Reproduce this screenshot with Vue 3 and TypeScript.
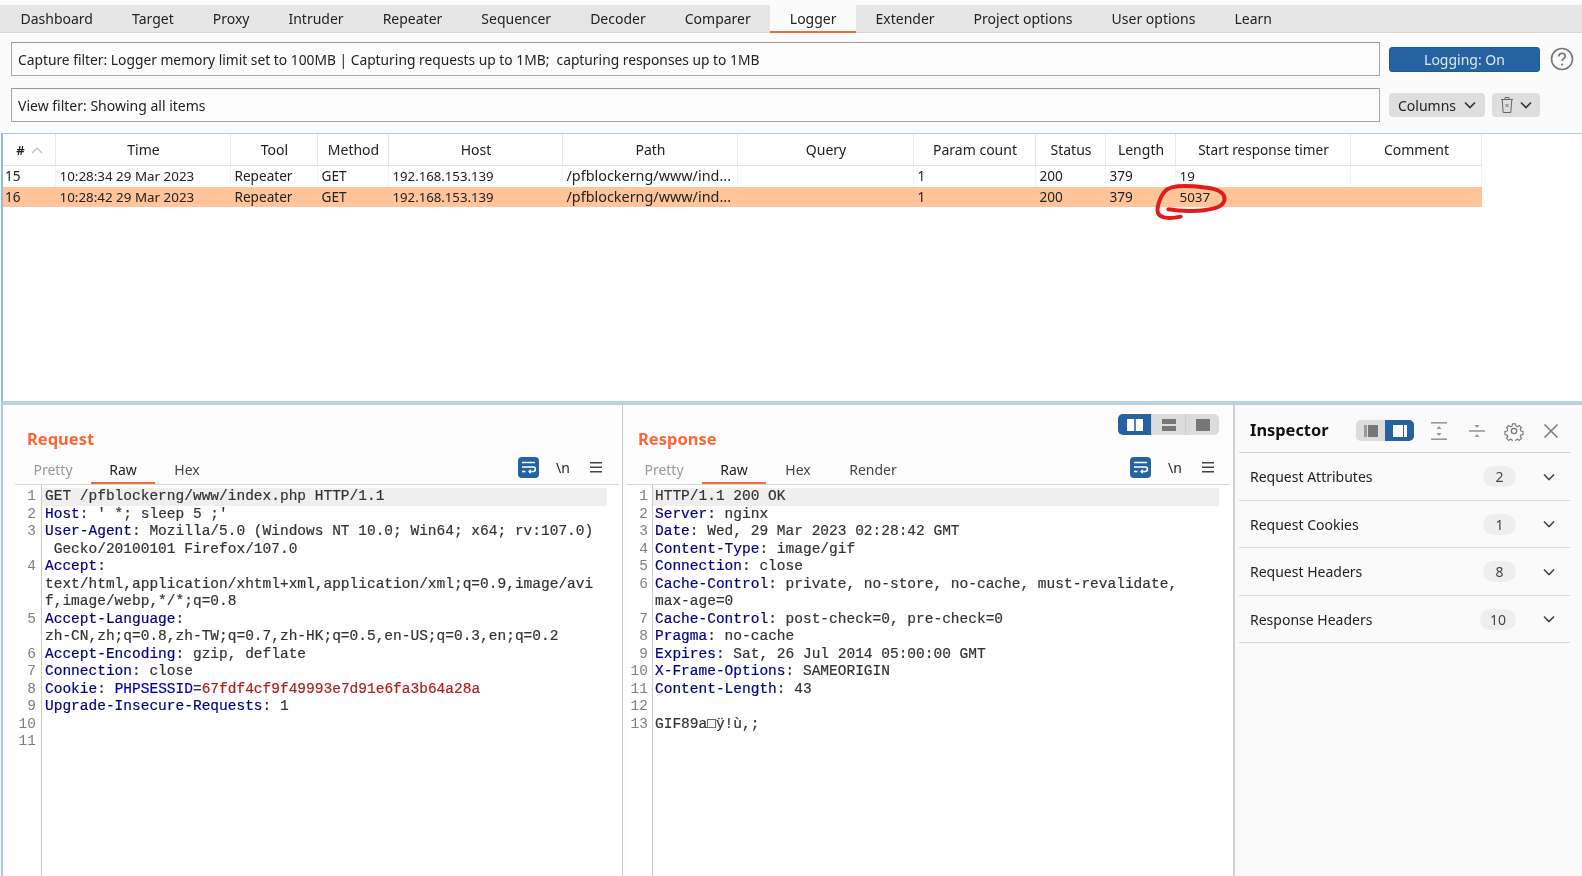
<script setup lang="ts">
interface Seg { t: string; c?: string }
interface Line { n: string; segs: Seg[] }

const tabs: string[] = ['Dashboard','Target','Proxy','Intruder','Repeater','Sequencer','Decoder','Comparer','Logger','Extender','Project options','User options','Learn']
const captureText = 'Capture filter: Logger memory limit set to 100MB | Capturing requests up to 1MB;  capturing responses up to 1MB'
const cols = ['#','Time','Tool','Method','Host','Path','Query','Param count','Status','Length','Start response timer','Comment']
const rows = [
  ['15','10:28:34 29 Mar 2023','Repeater','GET','192.168.153.139','/pfblockerng/www/ind...','','1','200','379','19',''],
  ['16','10:28:42 29 Mar 2023','Repeater','GET','192.168.153.139','/pfblockerng/www/ind...','','1','200','379','5037',''],
]
const k = (key: string, val: string, n: string): Line => ({ n, segs: [{ t: key, c: 'key' }, { t: val }] })
const p = (val: string, n = ''): Line => ({ n, segs: [{ t: val }] })
const reqLines: Line[] = [
  p('GET /pfblockerng/www/index.php HTTP/1.1','1'),
  k('Host',": ' *; sleep 5 ;'",'2'),
  k('User-Agent',': Mozilla/5.0 (Windows NT 10.0; Win64; x64; rv:107.0)','3'),
  p(' Gecko/20100101 Firefox/107.0'),
  k('Accept',':','4'),
  p('text/html,application/xhtml+xml,application/xml;q=0.9,image/avi'),
  p('f,image/webp,*/*;q=0.8'),
  k('Accept-Language',':','5'),
  p('zh-CN,zh;q=0.8,zh-TW;q=0.7,zh-HK;q=0.5,en-US;q=0.3,en;q=0.2'),
  k('Accept-Encoding',': gzip, deflate','6'),
  k('Connection',': close','7'),
  { n:'8', segs:[{t:'Cookie',c:'key'},{t:': '},{t:'PHPSESSID',c:'sess'},{t:'='},{t:'67fdf4cf9f49993e7d91e6fa3b64a28a',c:'red'}] },
  k('Upgrade-Insecure-Requests',': 1','9'),
  p('','10'),
  p('','11'),
]
const resLines: Line[] = [
  p('HTTP/1.1 200 OK','1'),
  k('Server',': nginx','2'),
  k('Date',': Wed, 29 Mar 2023 02:28:42 GMT','3'),
  k('Content-Type',': image/gif','4'),
  k('Connection',': close','5'),
  k('Cache-Control',': private, no-store, no-cache, must-revalidate,','6'),
  p('max-age=0'),
  k('Cache-Control',': post-check=0, pre-check=0','7'),
  k('Pragma',': no-cache','8'),
  k('Expires',': Sat, 26 Jul 2014 05:00:00 GMT','9'),
  k('X-Frame-Options',': SAMEORIGIN','10'),
  k('Content-Length',': 43','11'),
  p('','12'),
  p('GIF89a\u25A1ÿ!ù,;','13'),
]
const panels = [
  { cls:'req', title:'Request', tabs:['Pretty','Raw','Hex'], lines:reqLines },
  { cls:'res', title:'Response', tabs:['Pretty','Raw','Hex','Render'], lines:resLines },
]
const attrs = [
  { name:'Request Attributes', count:'2' },
  { name:'Request Cookies', count:'1' },
  { name:'Request Headers', count:'8' },
  { name:'Response Headers', count:'10' },
]
</script>

<template>
  <div class="app">
    <nav class="tabs">
      <div v-for="t in tabs" :key="t" class="tab" :class="{ active: t === 'Logger' }">{{ t }}</div>
    </nav>

    <section class="filters">
      <div class="filter-row first">
        <div class="filter capture">{{ captureText }}</div>
        <button class="logging">Logging: On</button>
        <svg class="help" width="24" height="24" viewBox="0 0 24 24">
          <circle cx="12" cy="12" r="10.5" fill="none" stroke="#777" stroke-width="1.6"/>
          <path d="M8.8 9.4c0-2 1.5-3.1 3.3-3.1s3.2 1.1 3.2 2.8c0 2.500-3.200 2.500-3.200 5" fill="none" stroke="#777" stroke-width="1.7"/>
          <circle cx="12.100" cy="17.600" r="1.100" fill="#777"/>
        </svg>
      </div>
      <div class="filter-row second">
        <div class="filter">View filter: Showing all items</div>
        <button class="grey columns">Columns
          <svg width="12" height="8" viewBox="0 0 12 8"><path d="M1 1.500l5 5 5-5" fill="none" stroke="#333" stroke-width="1.600"/></svg>
        </button>
        <button class="grey trash">
          <svg width="14" height="18" viewBox="0 0 14 18" fill="none" stroke="#666" stroke-width="1"><path d="M1 3.500h12M5 3.500V1.500h4v2M2.200 3.500l1 13h7.600l1-13"/><path d="M5.500 8l3 3M8.500 8l-3 3" stroke-width="0.900"/></svg>
          <svg width="12" height="8" viewBox="0 0 12 8"><path d="M1 1.500l5 5 5-5" fill="none" stroke="#333" stroke-width="1.600"/></svg>
        </button>
      </div>
    </section>

    <section class="table">
      <div class="thead grid">
        <div v-for="c in cols" :key="c" class="th" :class="{ narrow: c === 'Start response timer' }">
          <span v-if="c === '#'" class="hash">#
            <svg width="12" height="7" viewBox="0 0 12 7"><path d="M1 6l5-5 5 5" fill="none" stroke="#bbb" stroke-width="1.200"/></svg>
          </span>
          <template v-else>{{ c }}</template>
        </div>
      </div>
      <div v-for="(r, i) in rows" :key="i" class="tr grid" :class="{ sel: i === 1 }">
        <div v-for="(v, j) in r" :key="j" class="td" :class="'c' + j">{{ v }}</div>
      </div>
      <svg class="scribble" width="110" height="60" viewBox="0 0 330 180">
        <path d="M85 118C125 125 185 125 222 115C247 108 258 95 252 78C244 60 212 54 190 52C160 48 120 46 95 52C72 58 62 78 56 100C50 122 50 136 72 142C90 146 108 143 122 140" fill="none" stroke="#e01b1b" stroke-width="12" stroke-linecap="round"/>
      </svg>
    </section>

    <section class="bottom">
      <div v-for="pn in panels" :key="pn.cls" class="panel" :class="pn.cls">
        <div v-if="pn.cls === 'res'" class="views">
          <span class="view on"><svg width="18" height="12" viewBox="0 0 18 12" fill="#fff"><rect x="1" width="7.200" height="12"/><rect x="9.800" width="7.200" height="12"/></svg></span>
          <span class="view"><svg width="14" height="12" viewBox="0 0 14 12" fill="#777"><rect width="14" height="5"/><rect y="7" width="14" height="5"/></svg></span>
          <span class="view"><svg width="14" height="12" viewBox="0 0 14 12" fill="#777"><rect width="14" height="12"/></svg></span>
        </div>
        <h2 class="title">{{ pn.title }}</h2>
        <div class="subtabs">
          <span v-for="t in pn.tabs" :key="t" class="sub" :class="{ cur: t === 'Raw', dim: t === 'Pretty', render: t === 'Render' }">{{ t }}</span>
          <div class="tools">
            <span class="wrap">
              <svg width="21" height="21" viewBox="0 0 21 21" fill="none" stroke="#fff" stroke-width="1.600">
                <path d="M4 5.500h13M4 10h11.500c2.500 0 2.500 4.500 0 4.500H11"/><path d="M12.800 12.800L11 14.500l1.800 1.700" stroke-width="1.200"/><path d="M4 14.500h3.500"/>
              </svg>
            </span>
            <span class="nl">\n</span>
            <svg class="menu" width="12" height="11" viewBox="0 0 12 11" fill="#444"><rect width="12" height="1.500"/><rect y="4.500" width="12" height="1.500"/><rect y="9" width="12" height="1.500"/></svg>
          </div>
        </div>
        <div class="editor">
          <div class="gutter">
            <div v-for="(l, i) in pn.lines" :key="i" class="num">{{ l.n }}</div>
          </div>
          <div class="code">
            <div v-for="(l, i) in pn.lines" :key="i" class="line" :class="{ hl: i === 0 }"><span v-for="(s, j) in l.segs" :key="j" :class="s.c">{{ s.t }}</span></div>
          </div>
        </div>
      </div>

      <aside class="inspector">
        <header class="ins-head">
          <h3>Inspector</h3>
          <div class="toggle">
            <span class="tg"><svg width="14" height="12" viewBox="0 0 14 12"><rect width="3" height="12" fill="#999"/><rect x="4" width="10" height="12" fill="#777"/></svg></span>
            <span class="tg on"><svg width="14" height="12" viewBox="0 0 14 12" fill="#fff"><rect width="10" height="12"/><rect x="11" width="3" height="12"/></svg></span>
          </div>
          <svg class="ic a" width="16" height="18" viewBox="0 0 16 18" fill="#999"><rect width="16" height="1.600"/><rect y="16.400" width="16" height="1.600"/><path d="M8 4l2.500 3h-5zM8 14l-2.500-3h5z"/></svg>
          <svg class="ic b" width="16" height="18" viewBox="0 0 16 18" fill="#999"><rect y="8.200" width="16" height="1.600"/><path d="M8 6L5.500 3h5zM8 12l2.500 3h-5z"/></svg>
          <svg class="ic c" width="20" height="20" viewBox="0 0 24 24" fill="none" stroke="#777" stroke-width="1.500">
            <circle cx="12" cy="12" r="3.200"/>
            <path d="M10 2.500h4l.6 2.900 2 .9 2.500-1.600 2.800 2.800-1.600 2.500.9 2 2.800.6v4l-2.800.6-.9 2 1.600 2.500-2.800 2.800-2.500-1.600-2 .9-.6 2.900h-4l-.6-2.900-2-.9-2.500 1.600-2.800-2.800 1.600-2.500-.9-2-2.800-.6v-4l2.800-.6.9-2-1.600-2.500 2.800-2.800 2.500 1.600 2-.9z" transform="translate(1.200 1.200) scale(.9)"/>
          </svg>
          <svg class="ic d" width="14" height="14" viewBox="0 0 14 14" stroke="#777" stroke-width="1.500"><path d="M.5.5l13 13M13.500.5l-13 13"/></svg>
        </header>
        <div v-for="a in attrs" :key="a.name" class="attr">
          <span class="attr-name">{{ a.name }}</span>
          <span class="pill">{{ a.count }}</span>
          <svg class="chev" width="12" height="8" viewBox="0 0 12 8"><path d="M1 1.500l5 5 5-5" fill="none" stroke="#444" stroke-width="1.600"/></svg>
        </div>
      </aside>
    </section>
  </div>
</template>

<style>
html, body { margin: 0; background: #fbfbfb; overflow: hidden; }
</style>

<style scoped>
.app {
  width: 1582px; height: 876px; display: flex; flex-direction: column;
  font-family: "Noto Sans", "Open Sans", sans-serif; font-size: 14px; color: #222;
  background: #fbfbfb; filter: blur(0.4px);
}
.tabs { margin-top: 5px; height: 27px; border-bottom: 1px solid #d8d8d8; background: #e6e6e6; display: flex; padding-left: 1px; flex: none; }
.tab { padding: 0 19.5px; line-height: 27px; height: 28px; box-sizing: border-box; white-space: nowrap; }
.tab.active { background: #fbfbfb; border-bottom: 2px solid #f26b3a; }
.filters { flex: none; height: 100px; padding: 9px 0 0 11px; box-sizing: border-box; display: flex; flex-direction: column; gap: 12px; }
.filter-row { display: flex; align-items: center; height: 34px; }
.filter { width: 1369px; flex: none; height: 34px; box-sizing: border-box; border: 1px solid #a6a6a6; border-top-color: #999; padding: 0 6px; line-height: 34px; white-space: pre; background: #fcfcfc; }
.filter.capture { font-size: 13.800px; }
button { font: inherit; border: 0; padding: 0; color: inherit; }
.logging { margin-left: 9px; width: 151px; height: 25px; background: #24639f; color: #dbe8f4; border-radius: 3px; border: 1px solid #1f5a92; box-sizing: border-box; }
.help { margin-left: 10px; }
.grey { background: #dedede; border-radius: 4px; height: 24px; display: flex; align-items: center; justify-content: center; }
.columns { margin-left: 9px; width: 96px; gap: 8px; }
.trash { margin-left: 7px; width: 48px; gap: 6px; }
.table { flex: none; height: 271px; box-sizing: border-box; background: #fff; border-top: 1px solid #a9c8e8; border-bottom: 3px solid #b9d2ec; border-left: 2px solid #8fbbe6; margin-left: 1px; position: relative; }
.grid { display: grid; grid-template-columns: 53px 175px 87px 71px 174px 175px 176px 122px 70px 70px 175px 131px; width: 1479px; }
.thead { height: 31px; border-bottom: 1px solid #e4e4e4; }
.th { text-align: center; line-height: 32px; border-right: 1px solid #e8e8e8; white-space: nowrap; padding-left: 1px; box-sizing: border-box; }
.th.narrow { font-size: 13.600px; }
.hash { display: inline-flex; align-items: center; gap: 6px; font-weight: 600; font-size: 13px; }
.tr { height: 20px; margin-top: 0; }
.thead + .tr { height: 20.500px; }
.td { line-height: 20px; padding-left: 3.500px; white-space: nowrap; overflow: hidden; box-sizing: border-box; border-right: 1px solid #f4f4f4; font-size: 13.600px; }
.td:first-child { padding-left: 2px; }
.td.c1 { font-size: 13.400px; }
.td.c4 { font-size: 13.200px; }
.td.c5 { font-size: 14.400px; }
.td.c10 { font-size: 13.400px; }
.tr.sel { background: #ffc499; }
.tr.sel .td { border-right-color: transparent; }
.scribble { position: absolute; left: 1137px; top: 36px; }
.bottom { flex: 1; display: flex; min-height: 0; border-top: 1px solid #c8c8c8; margin-left: 1px; border-left: 2px solid #a9c8e8; }
.panel { position: relative; box-sizing: border-box; height: 100%; background: #fdfdfd; }
.panel.req { width: 620px; border-right: 1px solid #c8c8c8; padding: 0 0 0 12px; }
.panel.res { width: 612px; border-right: 2px solid #d0d0d0; padding-left: 3px; }
.title { margin: 23px 0 0; font-size: 16.500px; line-height: 22px; font-weight: 700; color: #ff6633; }
.req .title { padding-left: 12px; }
.res .title { padding-left: 12px; }
.subtabs { margin-top: 8px; height: 26px; border-bottom: 1px solid #d4dcd8; display: flex; margin-right: 3px; position: relative; box-sizing: content-box; }
.sub { height: 26px; line-height: 24px; box-sizing: border-box; width: 64px; text-align: center; color: #444; }
.sub.dim { color: #9a9a9a; width: 76px; }
.sub.cur { color: #222; border-bottom: 2px solid #f26b3a; }
.sub.render { margin-left: 11px; }
.tools { position: absolute; top: -1px; display: flex; align-items: center; height: 21px; }
.req .tools { left: 503px; }
.res .tools { left: 504px; }
.wrap { width: 21px; height: 21px; background: #24639f; border-radius: 4px; display: block; }
.wrap svg { display: block; }
.nl { width: 24px; margin-left: 12px; text-align: center; font-size: 14px; }
.menu { margin-left: 15px; }
.editor { display: flex; padding-top: 3px; background: #fff; height: calc(100% - 80px); box-sizing: border-box; }
.gutter { width: 27px; flex: none; border-right: 1px solid #ccc; box-sizing: border-box; margin-top: -3px; padding-top: 3px; }
.num { height: 17.500px; font: 14.500px/17.500px "Liberation Mono", monospace; color: #808080; text-align: right; padding-right: 5px; }
.res .num { padding-right: 4px; }
.code { flex: 1; font: 14.500px/17.500px "Liberation Mono", monospace; color: #333; -webkit-text-stroke: 0.2px; }
.line { height: 17.500px; padding-left: 3px; white-space: pre; margin-right: 15px; }
.res .line { margin-right: 14px; padding-left: 2px; }
.line.hl { background: #efefef; }
.key { color: #000080; }
.sess { color: #0000c0; }
.red { color: #b01c1c; }
.views { position: absolute; right: 14px; top: 9px; display: flex; width: 101px; height: 21px; border-radius: 5px; overflow: hidden; background: #dcdcdc; }
.view { flex: 1; display: flex; align-items: center; justify-content: center; border-left: 1px solid #cfcfcf; }
.view.on { background: #24639f; border-left: 0; }
.inspector { flex: 1; padding: 0 12px 0 4px; min-width: 0; background: #fafafa; }
.ins-head { height: 48px; border-bottom: 1px solid #d2d2d2; display: flex; align-items: center; padding-left: 11px; position: relative; box-sizing: border-box; }
.ins-head h3 { margin: 0; padding-top: 1px; font-size: 16.400px; font-weight: 700; color: #111; }
.toggle { position: absolute; left: 117px; top: 15px; width: 58px; height: 21px; border-radius: 5px; display: flex; overflow: hidden; background: #dcdcdc; }
.tg { flex: 1; display: flex; align-items: center; justify-content: center; }
.tg.on { background: #24639f; }
.ic { position: absolute; top: 17px; }
.ic.a { left: 192px; }
.ic.b { left: 230px; }
.ic.c { left: 265px; top: 16px; }
.ic.d { left: 305px; top: 19px; }
.attr { height: 47.500px; box-sizing: border-box; border-bottom: 1px solid #d8d8d8; display: flex; align-items: center; padding: 1px 15px 0 11px; }
.attr-name { flex: 1; color: #222; }
.pill { min-width: 13px; padding: 0 10px; height: 21px; line-height: 21px; background: #eeeeee; border-radius: 11px; text-align: center; color: #444; margin-right: 27px; }
.chev { flex: none; }
</style>
